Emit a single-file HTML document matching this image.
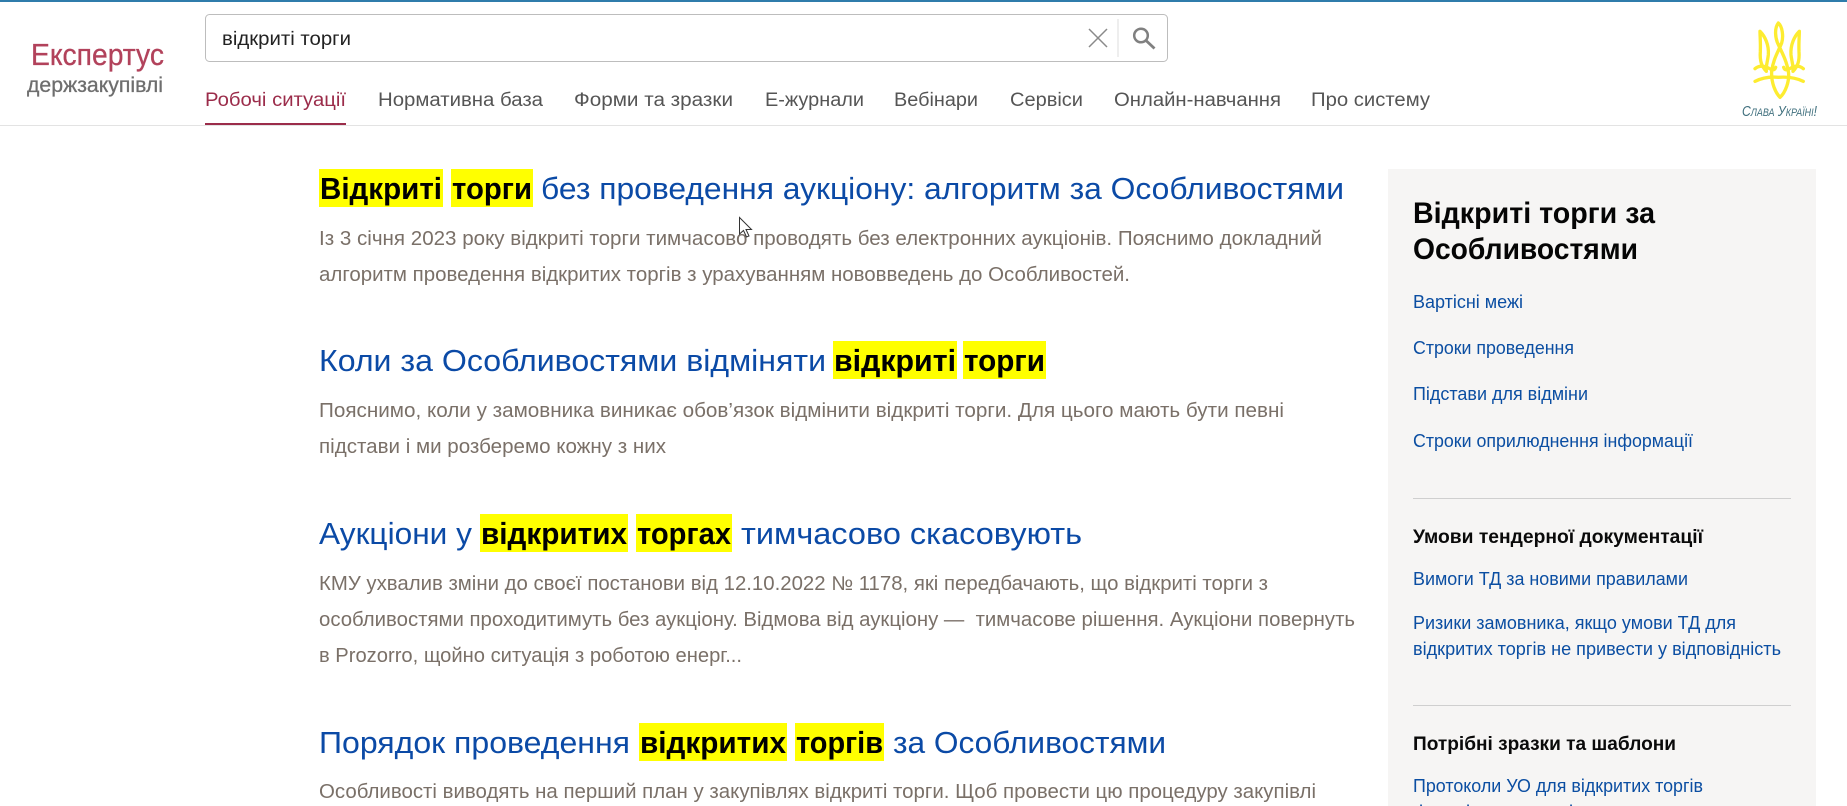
<!DOCTYPE html>
<html lang="uk">
<head>
<meta charset="utf-8">
<title>Експертус держзакупівлі</title>
<style>
html,body{margin:0;padding:0;width:1847px;height:806px;overflow:hidden;background:#fff}
svg{display:block}
text{font-family:"Liberation Sans",sans-serif;white-space:pre}
.nav{font-size:19px;fill:#555}
.t{font-size:30.500px;fill:#0b4aa6}
.h{font-size:31px;font-weight:700;fill:#000}
.d{font-size:20px;fill:#7a7068}
.l{font-size:18.500px;fill:#0b4ea2}
.sh{font-size:19px;font-weight:700;fill:#0a0a0a}
.y{fill:#ffff00}
</style>
</head>
<body>
<svg xmlns="http://www.w3.org/2000/svg" width="1847" height="806" viewBox="0 0 1847 806">
<rect width="1847" height="806" fill="#fff"/>
<rect width="1847" height="2" fill="#2f7cab"/>
<rect y="125" width="1847" height="1" fill="#e3e3e3"/>

<!-- logo -->
<text x="31" y="65" font-size="31" fill="#b2425b" stroke="#b2425b" stroke-width=".3" textLength="133" lengthAdjust="spacingAndGlyphs">Експертус</text>
<text x="27" y="92" font-size="21.500" fill="#6e6e6e" stroke="#6e6e6e" stroke-width=".3" textLength="136" lengthAdjust="spacingAndGlyphs">держзакупівлі</text>

<!-- search -->
<rect x="205.500" y="14.500" width="962" height="47" rx="4" fill="#fff" stroke="#bdbdbd"/>
<text x="222" y="45" font-size="19.500" fill="#222" textLength="129" lengthAdjust="spacingAndGlyphs">відкриті торги</text>
<path d="M1089 29L1107 47M1107 29L1089 47" stroke="#8a8a8a" stroke-width="1.500" fill="none"/>
<rect x="1117.500" y="19" width="1" height="38" fill="#dddddd"/>
<circle cx="1141" cy="35.500" r="6.800" fill="none" stroke="#808080" stroke-width="2.500"/>
<path d="M1146 40.500L1154.500 48.500" stroke="#808080" stroke-width="2.800" fill="none"/>

<!-- nav -->
<text class="nav" x="205" y="106" textLength="141" lengthAdjust="spacingAndGlyphs" style="fill:#9b2c4a">Робочі ситуації</text>
<rect x="205" y="123" width="141" height="2" fill="#9b2c4a"/>
<text class="nav" x="378" y="106" textLength="165" lengthAdjust="spacingAndGlyphs">Нормативна база</text>
<text class="nav" x="574" y="106" textLength="159" lengthAdjust="spacingAndGlyphs">Форми та зразки</text>
<text class="nav" x="765" y="106" textLength="99" lengthAdjust="spacingAndGlyphs">Е-журнали</text>
<text class="nav" x="894" y="106" textLength="84" lengthAdjust="spacingAndGlyphs">Вебінари</text>
<text class="nav" x="1010" y="106" textLength="73" lengthAdjust="spacingAndGlyphs">Сервіси</text>
<text class="nav" x="1114" y="106" textLength="167" lengthAdjust="spacingAndGlyphs">Онлайн-навчання</text>
<text class="nav" x="1311" y="106" textLength="119" lengthAdjust="spacingAndGlyphs">Про систему</text>

<!-- trident -->
<g transform="translate(1745 18) scale(.3333)" fill="none" stroke="#fdec30" stroke-width="10" stroke-linecap="round" stroke-linejoin="round">
<path d="M45 40C60 55 72 80 70 110C68 130 62 145 64 160C50 145 44 130 46 100C47 75 45 55 45 40Z"/>
<path d="M163 40C148 55 136 80 138 110C140 130 146 145 144 160C158 145 164 130 162 100C161 75 163 55 163 40Z"/>
<path d="M100 15C88 30 90 60 100 80C112 105 125 130 130 160C135 190 120 225 105 238C92 225 78 195 80 160C84 125 100 100 110 75C116 55 112 25 100 15Z"/>
<path d="M30 152C45 140 60 145 70 150C80 155 88 160 92 148M175 152C160 140 148 145 138 150C128 155 120 160 116 148"/>
<path d="M30 190C55 178 80 176 100 178C125 176 150 178 175 190"/>
</g>
<text x="1742" y="116" font-size="15" font-style="italic" fill="#3f6f7d" textLength="75" lengthAdjust="spacingAndGlyphs" style="font-variant:small-caps">Слава Україні!</text>

<!-- result 1 -->
<rect class="y" x="319" y="169" width="124" height="38"/>
<rect class="y" x="451" y="169" width="82" height="38"/>
<text class="h" x="320" y="199" textLength="122" lengthAdjust="spacingAndGlyphs">Відкриті</text>
<text class="h" x="452" y="199" textLength="80" lengthAdjust="spacingAndGlyphs">торги</text>
<text class="t" x="541" y="199" textLength="803" lengthAdjust="spacingAndGlyphs">без проведення аукціону: алгоритм за Особливостями</text>
<text class="d" x="319" y="245" textLength="1003" lengthAdjust="spacingAndGlyphs">Із 3 січня 2023 року відкриті торги тимчасово проводять без електронних аукціонів. Пояснимо докладний</text>
<text class="d" x="319" y="281" textLength="811" lengthAdjust="spacingAndGlyphs">алгоритм проведення відкритих торгів з урахуванням нововведень до Особливостей.</text>

<!-- result 2 -->
<rect class="y" x="833" y="341" width="124" height="38"/>
<rect class="y" x="963" y="341" width="83" height="38"/>
<text class="t" x="319" y="371" textLength="507" lengthAdjust="spacingAndGlyphs">Коли за Особливостями відміняти</text>
<text class="h" x="834" y="371" textLength="122" lengthAdjust="spacingAndGlyphs">відкриті</text>
<text class="h" x="964" y="371" textLength="81" lengthAdjust="spacingAndGlyphs">торги</text>
<text class="d" x="319" y="417" textLength="965" lengthAdjust="spacingAndGlyphs">Пояснимо, коли у замовника виникає обов’язок відмінити відкриті торги. Для цього мають бути певні</text>
<text class="d" x="319" y="453" textLength="347" lengthAdjust="spacingAndGlyphs">підстави і ми розберемо кожну з них</text>

<!-- result 3 -->
<rect class="y" x="480" y="514" width="148" height="38"/>
<rect class="y" x="636" y="514" width="96" height="38"/>
<text class="t" x="319" y="544" textLength="153" lengthAdjust="spacingAndGlyphs">Аукціони у</text>
<text class="h" x="481" y="544" textLength="146" lengthAdjust="spacingAndGlyphs">відкритих</text>
<text class="h" x="637" y="544" textLength="94" lengthAdjust="spacingAndGlyphs">торгах</text>
<text class="t" x="741" y="544" textLength="341" lengthAdjust="spacingAndGlyphs">тимчасово скасовують</text>
<text class="d" x="319" y="590" textLength="949" lengthAdjust="spacingAndGlyphs">КМУ ухвалив зміни до своєї постанови від 12.10.2022 № 1178, які передбачають, що відкриті торги з</text>
<text class="d" x="319" y="626" textLength="1036" lengthAdjust="spacingAndGlyphs">особливостями проходитимуть без аукціону. Відмова від аукціону —  тимчасове рішення. Аукціони повернуть</text>
<text class="d" x="319" y="662" textLength="423" lengthAdjust="spacingAndGlyphs">в Prozorro, щойно ситуація з роботою енерг...</text>

<!-- result 4 -->
<rect class="y" x="639" y="723" width="148" height="38"/>
<rect class="y" x="795" y="723" width="89" height="38"/>
<text class="t" x="319" y="753" textLength="311" lengthAdjust="spacingAndGlyphs">Порядок проведення</text>
<text class="h" x="640" y="753" textLength="146" lengthAdjust="spacingAndGlyphs">відкритих</text>
<text class="h" x="796" y="753" textLength="87" lengthAdjust="spacingAndGlyphs">торгів</text>
<text class="t" x="893" y="753" textLength="273" lengthAdjust="spacingAndGlyphs">за Особливостями</text>
<text class="d" x="319" y="798" textLength="997" lengthAdjust="spacingAndGlyphs">Особливості виводять на перший план у закупівлях відкриті торги. Щоб провести цю процедуру закупівлі</text>

<!-- sidebar -->
<rect x="1388" y="169" width="428" height="637" fill="#f6f5f4"/>
<text x="1413" y="223" font-size="29.500" font-weight="700" fill="#050505" textLength="242" lengthAdjust="spacingAndGlyphs">Відкриті торги за</text>
<text x="1413" y="259" font-size="29.500" font-weight="700" fill="#050505" textLength="225" lengthAdjust="spacingAndGlyphs">Особливостями</text>
<text class="l" x="1413" y="308" textLength="110" lengthAdjust="spacingAndGlyphs">Вартісні межі</text>
<text class="l" x="1413" y="354" textLength="161" lengthAdjust="spacingAndGlyphs">Строки проведення</text>
<text class="l" x="1413" y="400" textLength="175" lengthAdjust="spacingAndGlyphs">Підстави для відміни</text>
<text class="l" x="1413" y="447" textLength="280" lengthAdjust="spacingAndGlyphs">Строки оприлюднення інформації</text>
<rect x="1413" y="498" width="378" height="1" fill="#cfcfcf"/>
<text class="sh" x="1413" y="543" textLength="290" lengthAdjust="spacingAndGlyphs">Умови тендерної документації</text>
<text class="l" x="1413" y="585" textLength="275" lengthAdjust="spacingAndGlyphs">Вимоги ТД за новими правилами</text>
<text class="l" x="1413" y="629" textLength="323" lengthAdjust="spacingAndGlyphs">Ризики замовника, якщо умови ТД для</text>
<text class="l" x="1413" y="655" textLength="368" lengthAdjust="spacingAndGlyphs">відкритих торгів не привести у відповідність</text>
<rect x="1413" y="705" width="378" height="1" fill="#cfcfcf"/>
<text class="sh" x="1413" y="750" textLength="263" lengthAdjust="spacingAndGlyphs">Потрібні зразки та шаблони</text>
<text class="l" x="1413" y="792" textLength="290" lengthAdjust="spacingAndGlyphs">Протоколи УО для відкритих торгів</text>
<text class="l" y="818"><tspan x="1419">і</tspan><tspan x="1466">і</tspan><tspan x="1569">і</tspan></text>

<!-- cursor -->
<path d="M739.500 217.500V234L743.500 230.500L746.500 237L749 236L746 229.500L751.500 229.500Z" fill="#fff" stroke="#333" stroke-width="1"/>
</svg>
</body>
</html>
